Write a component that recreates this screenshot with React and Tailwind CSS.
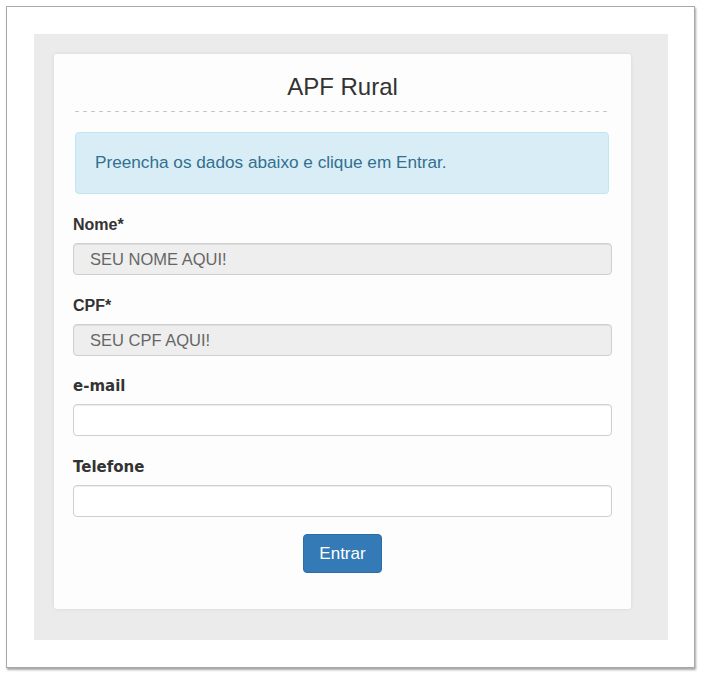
import React from "react";

function Field({ label, placeholder, disabled, alt, className = "" }) {
  return (
    <div className={"flex flex-col " + className}>
      <label
        className={
          "leading-[20px] font-bold text-[#333] mb-[8px] " +
          (alt ? "text-[15px]" : "text-[16px]")
        }
        style={alt ? { fontFamily: '"DejaVu Sans", Verdana, sans-serif' } : undefined}
      >
        {label}
      </label>
      <input
        type="text"
        disabled={disabled}
        placeholder={placeholder}
        className={
          "h-[32px] w-full rounded-[4px] border border-[#cfcfcf] px-[16px] text-[16.5px] text-[#555] placeholder:text-[#666] shadow-[inset_0_1px_1px_rgba(0,0,0,0.075)] outline-none " +
          (disabled ? "bg-[#eeeeee]" : "bg-white")
        }
        style={{ fontFamily: '"Liberation Sans", Arial, sans-serif' }}
      />
    </div>
  );
}

export default function App() {
  return (
    <div
      className="w-[702px] h-[678px] bg-white pt-[6px] pl-[6px]"
      style={{ fontFamily: '"Liberation Sans", Arial, sans-serif' }}
    >
      <div className="w-[689px] h-[662px] border border-[#a8a8a8] bg-white shadow-[1px_2px_2px_rgba(0,0,0,0.35)] pt-[27px] pl-[27px]">
        <div className="w-[634px] h-[606px] bg-[#ebebeb] pt-[20px] pl-[20px]">
          <div className="w-[577px] h-[555px] bg-[#fdfdfd] rounded-[3px] shadow-[0_0_4px_rgba(0,0,0,0.08)] pt-[17px] px-[19px]">
            <div className="mx-[2px] pb-[8px]">
              <h1 className="text-center text-[24px] leading-[32px] text-[#333]">APF Rural</h1>
            </div>
            <div className="mx-[2px] h-px bg-[linear-gradient(to_right,#c8c8c8_50%,transparent_50%)] bg-[length:8px_1px]"></div>
            <div className="mt-[20px] ml-[2px] mr-[3px] h-[62px] rounded-[4px] border border-[#bce8f1] bg-[#d9edf7] flex items-center px-[19px] text-[17.2px] text-[#31708f]">
              Preencha os dados abaixo e clique em Entrar.
            </div>
            <div className="mt-[21px] flex flex-col">
              <Field label="Nome*" placeholder="SEU NOME AQUI!" disabled />
              <Field label="CPF*" placeholder="SEU CPF AQUI!" disabled className="mt-[21px]" />
              <Field label="e-mail" alt className="mt-[20px]" />
              <Field label="Telefone" alt className="mt-[21px]" />
            </div>
            <div className="mt-[17px] flex justify-center">
              <button className="h-[39px] w-[79px] rounded-[4px] border border-[#2e6da4] bg-[#337ab7] text-white text-[17px]">
                Entrar
              </button>
            </div>
          </div>
        </div>
      </div>
    </div>
  );
}
